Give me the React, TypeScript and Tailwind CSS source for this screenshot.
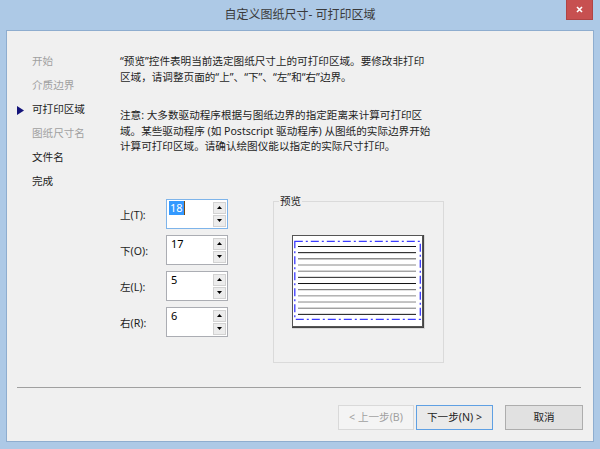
import React from "react";

const nav = [
  { label: "开始", enabled: false },
  { label: "介质边界", enabled: false },
  { label: "可打印区域", enabled: true, current: true },
  { label: "图纸尺寸名", enabled: false },
  { label: "文件名", enabled: true },
  { label: "完成", enabled: true },
];

const margins = [
  { label: "上(T):", value: "18", focused: true },
  { label: "下(O):", value: "17" },
  { label: "左(L):", value: "5" },
  { label: "右(R):", value: "6" },
];

function Arrow({ up }: { up?: boolean }) {
  return (
    <svg width="5" height="3" viewBox="0 0 5 3">
      <path d={up ? "M0 3 L2.5 0 L5 3 Z" : "M0 0 L5 0 L2.5 3 Z"} fill="#000" />
    </svg>
  );
}

function Spin({ value, focused }: { value: string; focused?: boolean }) {
  return (
    <div
      className={`flex h-[30px] w-[62px] border bg-white ${
        focused ? "border-[#7eb4ea]" : "border-[#abadb3]"
      }`}
    >
      <div className="flex-1 pl-[2px] pt-[1px] text-[11px] leading-[14px] text-black">
        {focused ? (
          <span className="inline-flex h-[14px]">
            <span className="bg-[#3399ff] px-[1px] text-white">{value}</span>
            <span className="w-px bg-[#7a4a10]" />
          </span>
        ) : (
          <span className="pl-[2px]">{value}</span>
        )}
      </div>
      <div className="mr-px flex w-[13px] flex-col gap-px pt-[2px] pb-px">
        <div className="flex flex-1 items-center justify-center border border-[#d2d2d2] bg-[#ececec]">
          <Arrow up />
        </div>
        <div className="flex flex-1 items-center justify-center border border-[#d2d2d2] bg-[#ececec]">
          <Arrow />
        </div>
      </div>
    </div>
  );
}

function Paper() {
  const lineColors = [
    "#111", "#111", "#555", "#8a8a8a", "#7a7a7a", "#222",
    "#111", "#666", "#8a8a8a", "#8a8a8a", "#777", "#111",
  ];
  return (
    <svg width="133" height="94" viewBox="0 0 133 94">
      <rect x="0" y="0" width="133" height="94" fill="#d8d8d8" />
      <rect x="0.5" y="0.5" width="130" height="91" fill="#fff" stroke="#555" />
      <line x1="131.5" y1="0" x2="131.5" y2="93" stroke="#444" />
      <line x1="0" y1="92.5" x2="132" y2="92.5" stroke="#444" />
      <rect
        x="2.8"
        y="6.3"
        width="125.5"
        height="78"
        fill="none"
        stroke="#3a3aff"
        strokeWidth="1.3"
        strokeDasharray="8 3 2 3"
      />
      {lineColors.map((c, i) => (
        <line
          key={i}
          x1="6"
          x2="124"
          y1={11.5 + i * 6.17}
          y2={11.5 + i * 6.17}
          stroke={c}
          strokeWidth="1"
        />
      ))}
    </svg>
  );
}

export default function App() {
  return (
    <div className="flex h-[449px] w-[600px] flex-col bg-[#adc9e6] font-['Noto_Sans','Noto_Sans_CJK_SC',sans-serif] text-[10.6px] text-[#1e1e1e]">
      {/* Title bar */}
      <div className="relative flex h-[30px] shrink-0 items-center justify-center">
        <span className="text-[12px] text-[#3a3a3a]">自定义图纸尺寸- 可打印区域</span>
        <div className="absolute top-0 right-[7px] flex h-[20px] w-[27px] items-center justify-center border-x border-b border-[#b04444] bg-[#c75050]">
          <svg width="7" height="7" viewBox="0 0 7 7">
            <path d="M1 1 L6 6 M6 1 L1 6" stroke="#fff" strokeWidth="1.6" />
          </svg>
        </div>
      </div>

      {/* Client area */}
      <div className="mx-[6px] mb-[7px] flex flex-1 flex-col border border-[#8eadcf] bg-[#f0f0f0]">
        <div className="flex flex-1">
          {/* Steps */}
          <div className="w-[113px] shrink-0 pt-[19px] pl-[10px]">
            {nav.map((item) => (
              <div key={item.label} className="flex h-[24px] items-center">
                <div className="flex w-[15px] items-center">
                  {item.current && (
                    <svg width="7" height="9" viewBox="0 0 7 9">
                      <path d="M0 0 L7 4.5 L0 9 Z" fill="#14147a" />
                    </svg>
                  )}
                </div>
                <span className={item.enabled ? "text-[#1e1e1e]" : "text-[#a0a0a0]"}>
                  {item.label}
                </span>
              </div>
            ))}
          </div>

          {/* Content */}
          <div className="flex-1 pt-[23px] leading-[15.5px]">
            <p className="whitespace-nowrap">
              “预览”控件表明当前选定图纸尺寸上的可打印区域。要修改非打印
              <br />
              区域，请调整页面的“上”、“下”、“左”和“右”边界。
            </p>
            <p className="mt-[23px] whitespace-nowrap">
              注意: 大多数驱动程序根据与图纸边界的指定距离来计算可打印区
              <br />
              域。某些驱动程序 (如 Postscript 驱动程序) 从图纸的实际边界开始
              <br />
              计算可打印区域。请确认绘图仪能以指定的实际尺寸打印。
            </p>

            <div className="mt-[44px] flex">
              <div className="flex flex-col gap-[6px]">
                {margins.map((m) => (
                  <div key={m.label} className="flex items-center">
                    <span className="w-[46px] pt-[4px]">{m.label}</span>
                    <Spin value={m.value} focused={m.focused} />
                  </div>
                ))}
              </div>

              <div className="relative mt-[2px] ml-[45px] flex h-[162px] w-[171px] items-center justify-center border border-[#dadada]">
                <span className="absolute top-[-9px] left-[5px] bg-[#f0f0f0] px-px leading-[16px]">
                  预览
                </span>
                <Paper />
              </div>
            </div>
          </div>
        </div>

        {/* Separator */}
        <div className="mr-[12px] ml-[10px] h-px bg-[#a0a0a0]" />

        {/* Buttons */}
        <div className="mt-[17px] mr-[10px] mb-[11px] flex justify-end">
          <button className="h-[25px] w-[76px] border border-[#d9d9d9] bg-[#f4f4f4] text-[10.6px] text-[#a0a0a0]">
            &lt; 上一步(B)
          </button>
          <button className="ml-[2px] h-[25px] w-[77px] border border-[#5fa0e3] bg-[#eaeaea] text-[10.6px] text-[#1e1e1e]">
            下一步(N) &gt;
          </button>
          <button className="ml-[12px] h-[25px] w-[78px] border border-[#adadad] bg-[#e1e1e1] text-[10.6px] text-[#1e1e1e]">
            取消
          </button>
        </div>
      </div>
    </div>
  );
}
